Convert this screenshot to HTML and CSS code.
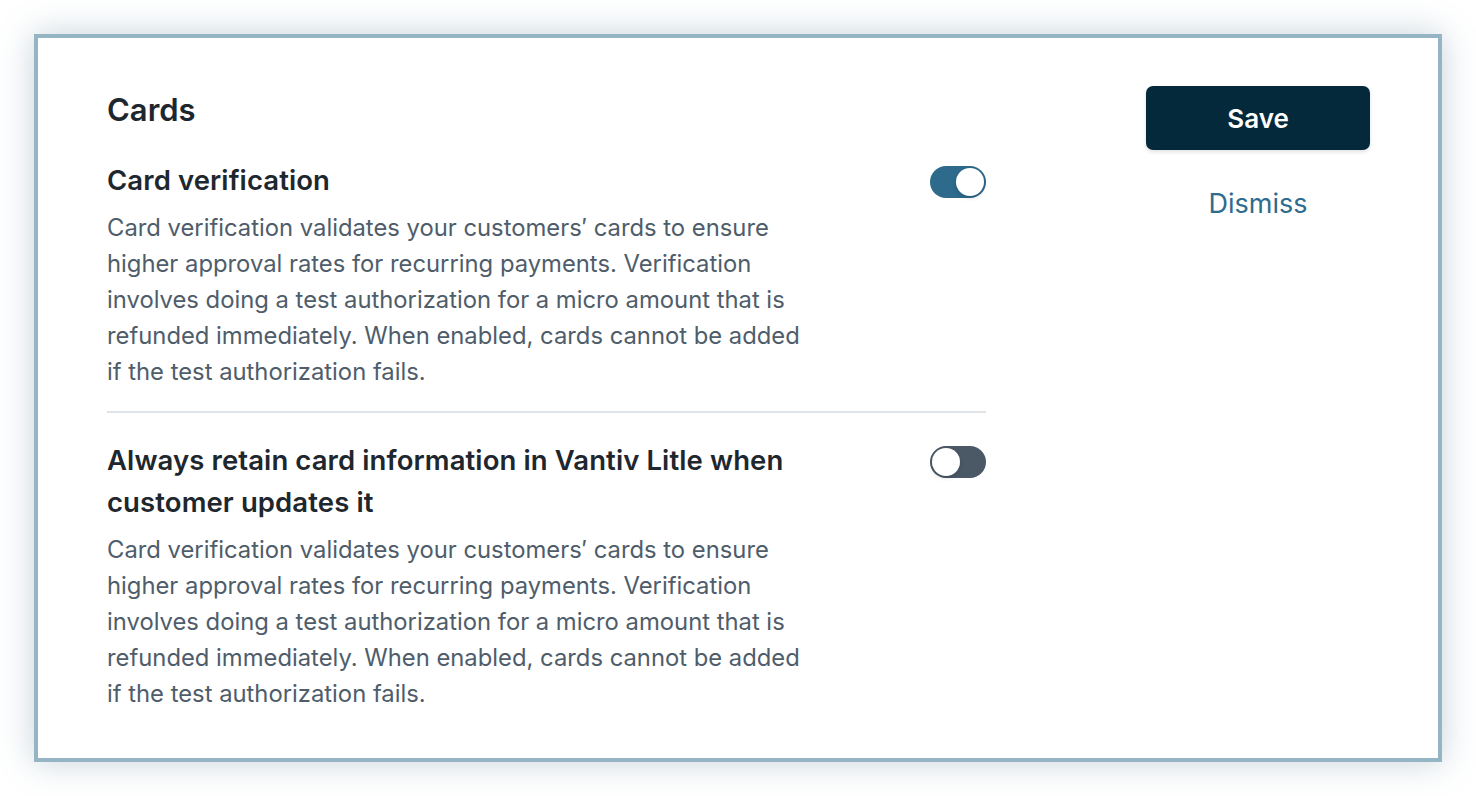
FILE: index.html
```html
<!DOCTYPE html>
<html>
<head>
  <meta charset="UTF-8">
  <title>Cards settings</title>
  <link rel="stylesheet" href="styles.css">
</head>
<body>
  <div class="panel">
    <div class="settings">
      <h1 class="title">Cards</h1>

      <div class="setting">
        <div class="setting-text">
          <h2 class="setting-name">Card verification</h2>
          <p class="setting-desc">Card verification validates your customers′ cards to ensure higher approval rates for recurring payments. Verification involves doing a test authorization for a micro amount that is refunded immediately. When enabled, cards cannot be added if the test authorization fails.</p>
        </div>
        <div class="toggle on"><span class="knob"></span></div>
      </div>

      <hr class="divider">

      <div class="setting">
        <div class="setting-text">
          <h2 class="setting-name">Always retain card information in Vantiv Litle when customer updates it</h2>
          <p class="setting-desc">Card verification validates your customers′ cards to ensure higher approval rates for recurring payments. Verification involves doing a test authorization for a micro amount that is refunded immediately. When enabled, cards cannot be added if the test authorization fails.</p>
        </div>
        <div class="toggle off"><span class="knob"></span></div>
      </div>
    </div>

    <div class="actions">
      <button class="btn-save" type="button">Save</button>
      <a class="btn-dismiss" href="#">Dismiss</a>
    </div>
  </div>
</body>
</html>
```

FILE: styles.css
```css
body{
  margin: 0;
  background-color: #fff;
  font-family: Inter, "Noto Sans", sans-serif;
  color: #1f2a33;
}
.panel{
  margin: 34px;
  height: 728px;
  box-sizing: border-box;
  border: 4px solid #95b5c5;
  background-color: #fff;
  box-shadow: 0 0 32px rgba(90,125,150,0.35);
  display: flex;
  justify-content: space-between;
  padding: 48px 68px 0 69px;
}
.settings{
  width: 879px;
}
.title{
  margin: 5px 0 30px;
  font-size: 31px;
  line-height: 38px;
  font-weight: 600;
  color: #1f272e;
}
.setting{
  display: flex;
  justify-content: space-between;
  align-items: flex-start;
}
.setting-text{
  width: 700px;
}
.setting-name{
  margin: 0;
  font-size: 27.5px;
  line-height: 42px;
  font-weight: 600;
  color: #1f272e;
  letter-spacing: 0.1px;
}
.setting-desc{
  margin: 9px 0 0;
  font-size: 23.8px;
  line-height: 36px;
  color: #4f5d6b;
}
.divider{
  border: 0;
  border-top: 2px solid #e1e4e7;
  margin: 21px 0 26px;
}
.toggle{
  width: 56px;
  height: 32px;
  border-radius: 16px;
  box-sizing: border-box;
  position: relative;
  margin-top: 7px;
}
.toggle.on{
  background-color: #2d6a8c;
}
.toggle.off{
  background-color: #4b5866;
}
.knob{
  position: absolute;
  top: 2px;
  width: 28px;
  height: 28px;
  border-radius: 50%;
  background-color: #fff;
  box-shadow: 0 2px 4px rgba(0,0,0,0.15);
}
.toggle.on .knob{
  right: 2px;
}
.toggle.off .knob{
  left: 2px;
}
.actions{
  width: 224px;
  display: flex;
  flex-direction: column;
  align-items: center;
}
.btn-save{
  width: 224px;
  height: 64px;
  border: 0;
  border-radius: 7px;
  background-color: #04293a;
  color: #fff;
  font-family: Inter, "Noto Sans", sans-serif;
  font-size: 26px;
  font-weight: 600;
  box-shadow: 0 2px 4px rgba(0,0,0,0.12);
}
.btn-dismiss{
  margin-top: 37px;
  font-size: 27px;
  color: #2e6b8e;
  text-decoration: none;
}
```
